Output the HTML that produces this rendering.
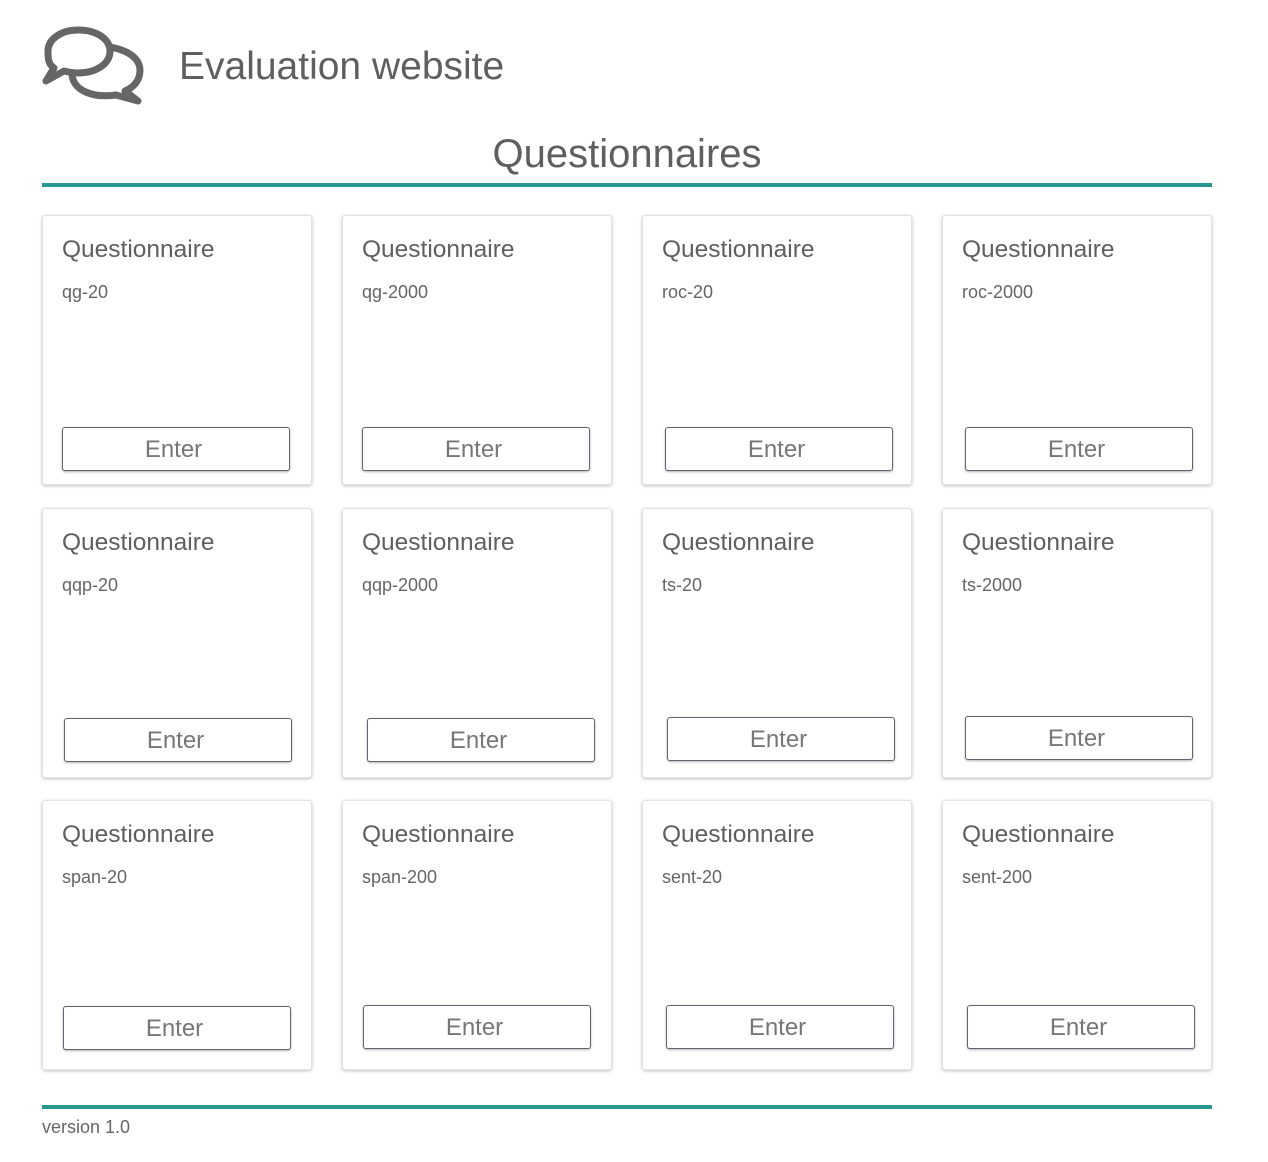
<!DOCTYPE html>
<html><head><meta charset="utf-8"><style>
body{margin:0;background:#fff;font-family:"Liberation Sans",sans-serif;color:#5f5f5f;}
.abs{position:absolute}
.card{position:absolute;width:268px;height:268px;border:1px solid #e3e3e3;border-radius:3px;box-shadow:0 1px 3px rgba(0,0,0,.25);background:#fff}
.card .t{position:absolute;left:19px;top:20px;font-size:24.5px;color:#5f5f5f}
.card .s{position:absolute;left:19px;top:66px;font-size:18px;color:#666}
.btn{position:absolute;width:226px;height:42px;border:1px solid #5e6470;border-radius:3px;box-shadow:0 1px 2px rgba(0,0,0,.3);background:#fff;font-size:24px;text-align:center;line-height:44px;color:#777;text-indent:-5px}
</style></head><body>
<svg class="abs" style="left:0;top:0" width="160" height="115">
<g fill="#fff" stroke="#666" stroke-width="7" stroke-linejoin="round">
<path d="M82 48 C110 42 140 52 140 70 C140 82 132 88 125 91 L138 101 L116 95 C95 98 70 92 72 70 Z"/>
<path d="M78 30 C98 30 110 40 110 51 C110 64 96 73 78 73 C72 73 68 72 64 71 L46 81 L54 68 C48 64 48 58 48 51 C48 40 60 30 78 30 Z"/>
</g></svg>
<div class="abs" style="left:179px;top:45px;font-size:39px;color:#5f5f5f">Evaluation website</div>
<div class="abs" style="left:0;width:1254px;top:132px;font-size:40px;text-align:center;color:#5f5f5f">Questionnaires</div>
<div class="abs" style="left:42px;top:183px;width:1170px;height:4px;background:#2a9690"></div>

<div class="card" style="left:42px;top:215px"><div class="t">Questionnaire</div><div class="s">qg-20</div></div>
<div class="card" style="left:342px;top:215px"><div class="t">Questionnaire</div><div class="s">qg-2000</div></div>
<div class="card" style="left:642px;top:215px"><div class="t">Questionnaire</div><div class="s">roc-20</div></div>
<div class="card" style="left:942px;top:215px"><div class="t">Questionnaire</div><div class="s">roc-2000</div></div>
<div class="card" style="left:42px;top:508px"><div class="t">Questionnaire</div><div class="s">qqp-20</div></div>
<div class="card" style="left:342px;top:508px"><div class="t">Questionnaire</div><div class="s">qqp-2000</div></div>
<div class="card" style="left:642px;top:508px"><div class="t">Questionnaire</div><div class="s">ts-20</div></div>
<div class="card" style="left:942px;top:508px"><div class="t">Questionnaire</div><div class="s">ts-2000</div></div>
<div class="card" style="left:42px;top:800px"><div class="t">Questionnaire</div><div class="s">span-20</div></div>
<div class="card" style="left:342px;top:800px"><div class="t">Questionnaire</div><div class="s">span-200</div></div>
<div class="card" style="left:642px;top:800px"><div class="t">Questionnaire</div><div class="s">sent-20</div></div>
<div class="card" style="left:942px;top:800px"><div class="t">Questionnaire</div><div class="s">sent-200</div></div>

<div class="btn" style="left:62px;top:427px">Enter</div>
<div class="btn" style="left:362px;top:427px">Enter</div>
<div class="btn" style="left:665px;top:427px">Enter</div>
<div class="btn" style="left:965px;top:427px">Enter</div>
<div class="btn" style="left:64px;top:718px">Enter</div>
<div class="btn" style="left:367px;top:718px">Enter</div>
<div class="btn" style="left:667px;top:717px">Enter</div>
<div class="btn" style="left:965px;top:716px">Enter</div>
<div class="btn" style="left:63px;top:1006px">Enter</div>
<div class="btn" style="left:363px;top:1005px">Enter</div>
<div class="btn" style="left:666px;top:1005px">Enter</div>
<div class="btn" style="left:967px;top:1005px">Enter</div>

<div class="abs" style="left:42px;top:1105px;width:1170px;height:4px;background:#2a9690"></div>
<div class="abs" style="left:42px;top:1117px;font-size:18px;color:#666">version 1.0</div>
</body></html>
